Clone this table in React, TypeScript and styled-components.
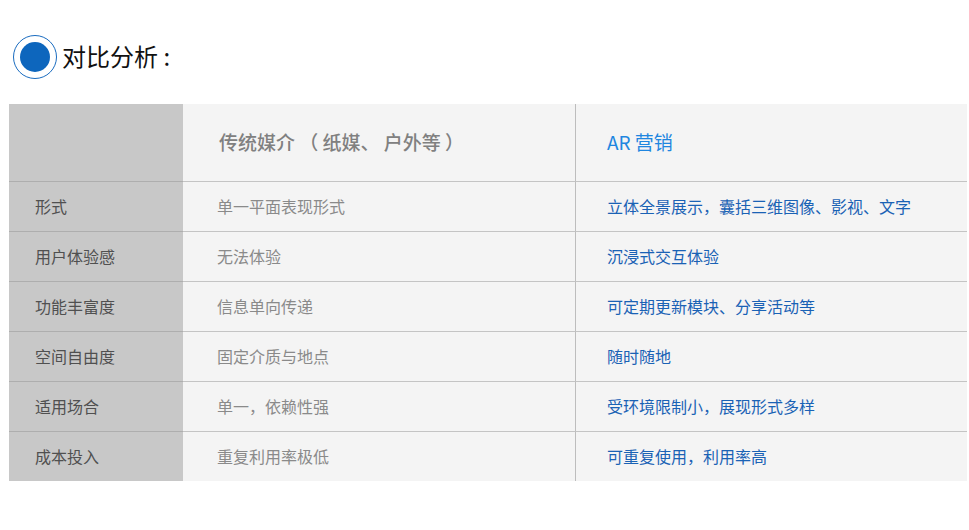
import React from "react";
import styled, { createGlobalStyle } from "styled-components";

const Global = createGlobalStyle`
  html, body { margin: 0; padding: 0; background: #fff; }
  body { font-family: "Noto Sans CJK SC", "Noto Sans", sans-serif; }
`;

const Page = styled.div`
  width: 969px;
  height: 530px;
  padding: 34px 0 0 9px;
  box-sizing: border-box;
`;

const Heading = styled.div`
  display: flex;
  align-items: center;
  gap: 5px;
  height: 46px;
  margin-left: 4px;
  margin-bottom: 24px;
`;

const Ring = styled.div`
  width: 44px;
  height: 44px;
  border: 1.5px solid #1a6cc0;
  border-radius: 50%;
  display: flex;
  align-items: center;
  justify-content: center;
  box-sizing: border-box;
`;

const Dot = styled.div`
  width: 30px;
  height: 30px;
  border-radius: 50%;
  background: #0d66bd;
`;

const Title = styled.h2`
  margin: 0;
  font-size: 24px;
  font-weight: 400;
  color: #111;
  line-height: 1;
  margin-top: -3px;
`;

const Table = styled.div`
  display: grid;
  grid-template-columns: 174px 392px 392px;
  width: 958px;
`;

const Cell = styled.div<{ $col: number; $head?: boolean }>`
  height: ${(p) => (p.$head ? "77px" : "50px")};
  box-sizing: border-box;
  display: flex;
  align-items: center;
  background: ${(p) => (p.$col === 0 ? "#c8c8c8" : "#f4f4f4")};
  border-top: ${(p) => (p.$head ? "none" : "1px solid " + (p.$col === 0 ? "#aeaeae" : "#c4c4c4"))};
  border-left: ${(p) => (p.$col === 2 ? "1px solid #bdbdbd" : "none")};
  padding-left: ${(p) => (p.$col === 0 ? "26px" : p.$col === 1 ? (p.$head ? "36px" : "34px") : "31px")};
  padding-bottom: ${(p) => (p.$head ? "3px" : "2px")};
  font-size: ${(p) => (p.$head ? "19px" : "16px")};
  font-weight: ${(p) => (p.$head && p.$col === 1 ? 500 : 400)};
  color: ${(p) =>
    p.$col === 0 ? "#505050" : p.$col === 1 ? (p.$head ? "#808080" : "#8a8a8a") : p.$head ? "#1f86e0" : "#1a62b5"};
  white-space: pre;
`;

const rows: [string, string, string][] = [
  ["形式", "单一平面表现形式", "立体全景展示，囊括三维图像、影视、文字"],
  ["用户体验感", "无法体验", "沉浸式交互体验"],
  ["功能丰富度", "信息单向传递", "可定期更新模块、分享活动等"],
  ["空间自由度", "固定介质与地点", "随时随地"],
  ["适用场合", "单一，依赖性强", "受环境限制小，展现形式多样"],
  ["成本投入", "重复利用率极低", "可重复使用，利用率高"],
];

export default function App() {
  return (
    <Page>
      <Global />
      <Heading>
        <Ring>
          <Dot />
        </Ring>
        <Title>对比分析 :</Title>
      </Heading>
      <Table>
        <Cell $col={0} $head />
        <Cell $col={1} $head>传统媒介 （ 纸媒、 户外等 ）</Cell>
        <Cell $col={2} $head>AR 营销</Cell>
        {rows.map((r) => (
          <React.Fragment key={r[0]}>
            <Cell $col={0}>{r[0]}</Cell>
            <Cell $col={1}>{r[1]}</Cell>
            <Cell $col={2}>{r[2]}</Cell>
          </React.Fragment>
        ))}
      </Table>
    </Page>
  );
}
